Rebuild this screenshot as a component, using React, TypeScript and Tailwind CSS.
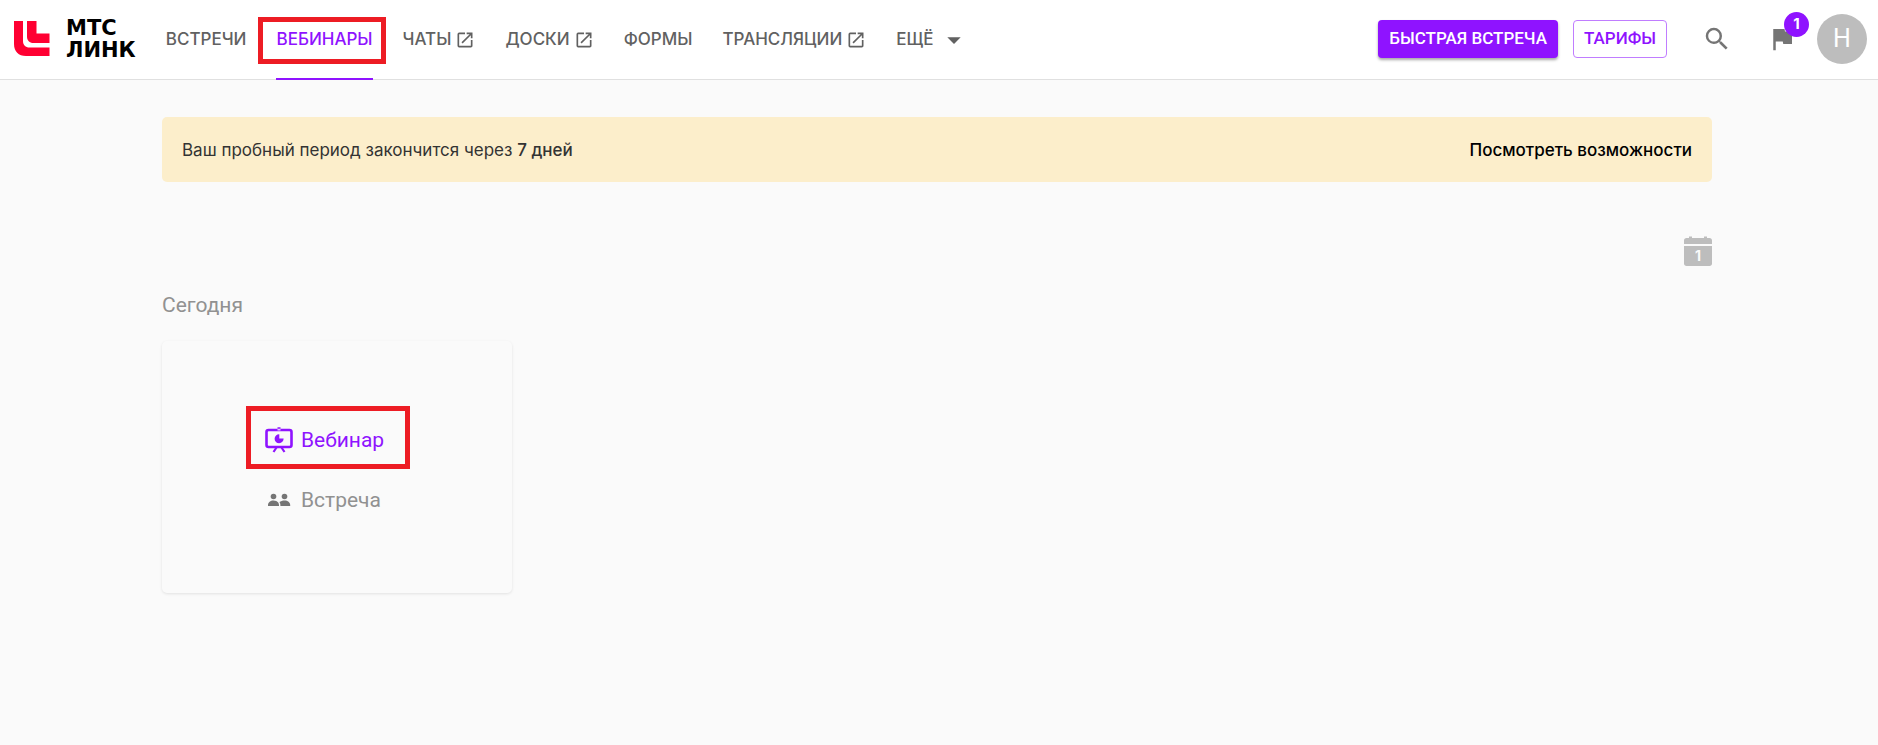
import { MdArrowDropDown, MdFlag, MdOpenInNew, MdSearch } from "react-icons/md";

type NavItem = {
  label: string;
  active?: boolean;
  external?: boolean;
};

const navItems: NavItem[] = [
  { label: "ВСТРЕЧИ" },
  { label: "ВЕБИНАРЫ", active: true },
  { label: "ЧАТЫ", external: true },
  { label: "ДОСКИ", external: true },
  { label: "ФОРМЫ" },
  { label: "ТРАНСЛЯЦИИ", external: true },
];

function Logo() {
  return (
    <a href="#" className="flex items-center gap-4 pb-[2px]">
      <svg width="36" height="36" viewBox="0 0 36 36" fill="#ff0032" aria-hidden="true">
        <path d="M0 0h9v20c0 4 2.500 6.500 6.500 6.500h20V35H12C4.500 35 0 30.500 0 23z" />
        <path d="M13 0h9.500v12.500h13v9.500H19.500c-4 0-6.500-2.500-6.500-6.500z" />
      </svg>
      <span className="flex flex-col font-['DejaVu_Sans',sans-serif] text-[21px] leading-[22px] font-bold text-black">
        <span>МТС</span>
        <span>ЛИНК</span>
      </span>
    </a>
  );
}

function WebinarIcon() {
  return (
    <svg width="28" height="26" viewBox="0 0 28 26" fill="none" stroke="currentColor" aria-hidden="true">
      <rect x="1.500" y="3" width="25" height="17" rx="2" strokeWidth="2.600" />
      <path d="M12.500 1h3" strokeWidth="1.500" />
      <path d="M12.500 2.800h3" stroke="#fafafa" strokeWidth="1.200" />
      <path d="M11.500 20.500 8.500 25M16.500 20.500l3 4.500" strokeWidth="2.200" />
      <path d="M14.300 7.200v4.300h4.300a4.500 4.500 0 1 1-4.300-4.300z" fill="currentColor" stroke="none" />
    </svg>
  );
}

function MeetingIcon() {
  return (
    <svg width="28" height="26" viewBox="0 0 28 26" fill="#757575" aria-hidden="true">
      <circle cx="8.500" cy="9.500" r="2.800" />
      <circle cx="19.500" cy="9.500" r="2.800" />
      <path d="M3 19v-1c0-2.500 2.500-4.500 5.500-4.500 2 0 3.800.8 4.700 2.100.5.700.8 1.500.8 2.400v1z" />
      <path d="M15.400 19v-1c0-1.100-.3-2-.9-2.900 1.100-1.100 3-1.600 5.200-1.600 3 0 5.500 2 5.500 4.500V19z" />
    </svg>
  );
}

function CalendarIcon() {
  return (
    <svg width="28" height="30" viewBox="0 0 28 30" fill="#bdbdbd" aria-hidden="true">
      <path d="M0 8V4.500C0 3 1 2 2.500 2H5V.5h3V2h12V.5h3V2h2.500C27 2 28 3 28 4.500V8z" />
      <path d="M0 10h28v17.500c0 1.500-1 2.500-2.500 2.500h-23C1 30 0 29 0 27.500z" />
      <text x="14" y="25" textAnchor="middle" fontSize="14" fontWeight="700" fill="#fafafa">
        1
      </text>
    </svg>
  );
}

function Header() {
  return (
    <header className="flex h-20 items-center border-b border-[#e0e0e0] bg-white pr-[11px] pl-[14px]">
      <Logo />
      <nav className="ml-[30px] flex h-20 items-center gap-[30px] self-start text-[17px] font-medium text-[#616161]">
        {navItems.map((item) => (
          <a
            key={item.label}
            href="#"
            className={
              item.active
                ? "relative flex h-20 items-center border-b-2 border-[#8f13ff] pt-[2px] text-[#8f13ff]"
                : "flex h-20 items-center gap-1"
            }
          >
            {item.label}
            {item.external ? <MdOpenInNew className="size-5" /> : null}
            {item.active ? (
              <span className="pointer-events-none absolute top-[17px] -right-[13px] -left-[18px] h-[47px] border-[5px] border-[#ed1c24]" />
            ) : null}
          </a>
        ))}
        <button type="button" className="flex items-center gap-1">
          ЕЩЁ
          <MdArrowDropDown className="size-8" />
        </button>
      </nav>

      <div className="ml-auto flex items-center pb-px">
        <button
          type="button"
          className="h-[38px] rounded bg-[#8f13ff] px-[11px] font-[Roboto,sans-serif] text-[17px] font-medium text-white shadow-[0_2px_3px_rgba(0,0,0,0.35)]"
        >
          БЫСТРАЯ ВСТРЕЧА
        </button>
        <button
          type="button"
          className="ml-[15px] h-[38px] rounded border border-[#c07dff] px-[10px] font-[Roboto,sans-serif] text-[17px] font-medium text-[#8f13ff]"
        >
          ТАРИФЫ
        </button>
        <button type="button" aria-label="Поиск" className="ml-[35px] text-[#757575]">
          <MdSearch className="size-[30px]" />
        </button>
        <button type="button" aria-label="Уведомления" className="relative ml-[35px] text-[#757575]">
          <MdFlag className="size-[30px]" />
          <span className="absolute -top-3 left-[17px] flex size-[25px] items-center justify-center rounded-full bg-[#8f13ff] text-[15px] font-bold text-white">
            1
          </span>
        </button>
        <button
          type="button"
          aria-label="Профиль"
          className="ml-5 flex size-[50px] items-center justify-center rounded-full bg-[#bdbdbd] font-[Roboto,sans-serif] text-[25px] text-white"
        >
          Н
        </button>
      </div>
    </header>
  );
}

export default function App() {
  return (
    <div className="min-h-screen bg-[#fafafa] font-[Inter,sans-serif]">
      <Header />
      <main className="pt-[37px] pr-[166px] pl-[162px]">
        <div className="flex h-[65px] items-center justify-between rounded-[5px] bg-[#fceecb] px-5 pt-[2px] text-[17px]">
          <p className="text-[#333333]">
            Ваш пробный период закончится через <strong className="font-medium">7 дней</strong>
          </p>
          <a href="#" className="font-medium text-black">
            Посмотреть возможности
          </a>
        </div>

        <div className="mt-[54px] flex justify-end">
          <button type="button" aria-label="Календарь">
            <CalendarIcon />
          </button>
        </div>

        <h2 className="mt-[25px] font-[Roboto,sans-serif] text-[21px] leading-7 text-[#919191]">Сегодня</h2>

        <section className="mt-[22px] flex h-[252px] w-[350px] flex-col items-start gap-[34px] rounded-[5px] pt-[86px] pl-[103px] font-[Roboto,sans-serif] text-[21px] leading-[26px] shadow-[0_1px_3px_rgba(0,0,0,0.1)]">
          <button type="button" className="relative flex items-center gap-2 text-[#8f13ff]">
            <WebinarIcon />
            Вебинар
            <span className="pointer-events-none absolute -top-[21px] -right-[26px] -left-[19px] h-[63px] border-[5px] border-[#ed1c24]" />
          </button>
          <button type="button" className="flex items-center gap-2 text-[#919191]">
            <MeetingIcon />
            Встреча
          </button>
        </section>
      </main>
    </div>
  );
}
